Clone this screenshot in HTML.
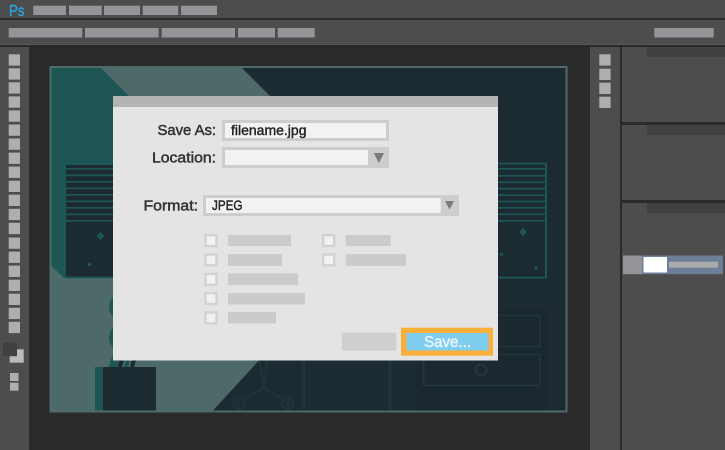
<!DOCTYPE html>
<html lang="en">
<head>
<meta charset="utf-8">
<title>Save As</title>
<style>
html,body{margin:0;padding:0;background:#2a2a2a;width:725px;height:450px;overflow:hidden}
svg{display:block}
text{font-family:"Liberation Sans",sans-serif}
</style>
</head>
<body>
<svg xmlns="http://www.w3.org/2000/svg" width="725" height="450" viewBox="0 0 725 450">
<rect width="725" height="450" fill="#2a2a2a"/>
<!-- top bars -->
<rect width="725" height="18" fill="#4c4c4c"/>
<rect y="18" width="725" height="2" fill="#2c2c2c"/>
<rect y="20" width="725" height="24" fill="#4d4d4d"/>
<rect y="44" width="725" height="1" fill="#575757"/>
<text x="9" y="16" font-size="15.5" fill="#2ea5df" stroke="#2ea5df" stroke-width=".4" textLength="15.5" lengthAdjust="spacingAndGlyphs">Ps</text>
<g fill="#939598">
<rect x="33.3" y="5.7" width="32.7" height="9.3"/>
<rect x="69" y="5.7" width="32.7" height="9.3"/>
<rect x="104" y="5.7" width="36" height="9.3"/>
<rect x="142.7" y="5.7" width="35.6" height="9.3"/>
<rect x="181" y="5.7" width="36" height="9.3"/>
<rect x="8.7" y="28" width="73.6" height="9.5"/>
<rect x="85" y="28" width="73.7" height="9.5"/>
<rect x="161.7" y="28" width="73.3" height="9.5"/>
<rect x="238" y="28" width="37" height="9.5"/>
<rect x="277.7" y="28" width="37" height="9.5"/>
<rect x="654.3" y="28" width="59.4" height="9.5"/>
</g>
<!-- left toolbar -->
<rect y="47" width="29" height="403" fill="#4d4d4d"/>
<g fill="#adaeb0">
<rect x="8.7" y="54.3" width="11.3" height="11.3"/><rect x="8.7" y="68.3" width="11.3" height="11.3"/>
<rect x="8.7" y="82.3" width="11.3" height="11.3"/><rect x="8.7" y="96.4" width="11.3" height="11.3"/>
<rect x="8.7" y="110.4" width="11.3" height="11.3"/><rect x="8.7" y="124.5" width="11.3" height="11.3"/>
<rect x="8.7" y="138.5" width="11.3" height="11.3"/><rect x="8.7" y="152.6" width="11.3" height="11.3"/>
<rect x="8.7" y="166.6" width="11.3" height="11.3"/><rect x="8.7" y="180.7" width="11.3" height="11.3"/>
<rect x="8.7" y="194.7" width="11.3" height="11.3"/><rect x="8.7" y="208.8" width="11.3" height="11.3"/>
<rect x="8.7" y="222.8" width="11.3" height="11.3"/><rect x="8.7" y="237.5" width="11.3" height="11.3"/>
<rect x="8.7" y="251.6" width="11.3" height="11.3"/><rect x="8.7" y="265.6" width="11.3" height="11.3"/>
<rect x="8.7" y="279.7" width="11.3" height="11.3"/><rect x="8.7" y="293.7" width="11.3" height="11.3"/>
<rect x="8.7" y="307.8" width="11.3" height="11.3"/><rect x="8.7" y="321.8" width="11.3" height="11.3"/>
</g>
<rect x="9.7" y="349.3" width="14" height="13.4" fill="#b9babc"/>
<rect x="3" y="342.7" width="14" height="13.5" fill="#404042"/>
<rect x="10" y="373" width="8.5" height="8" fill="#adaeb0"/>
<rect x="10" y="382.7" width="8.5" height="8" fill="#adaeb0"/>
<!-- canvas -->
<rect x="49.5" y="66" width="518" height="346.5" fill="#4e6b6a"/>
<rect x="51.5" y="68" width="514" height="342.5" fill="#1c2b32"/>
<polygon points="51.5,68 242,68 300,126 300,300 263,356 213,410.5 51.5,410.5" fill="#4d6a69"/>
<polygon points="51.5,68 101,68 180,147 180,278 64,278 51.5,266" fill="#1d5654"/>
<!-- darker cabinet -->
<rect x="415" y="307" width="133" height="103.5" fill="#1b2830"/>
<rect x="423.7" y="315.5" width="116" height="31" fill="none" stroke="#21373c" stroke-width="1.6"/>
<rect x="423.7" y="354.5" width="116" height="31" fill="none" stroke="#21373c" stroke-width="1.6"/>
<circle cx="481" cy="370" r="5.5" fill="none" stroke="#21393e" stroke-width="1.8"/>
<!-- chair & lines -->
<g fill="none" stroke="#1f3539" stroke-width="1.8">
<path d="M303.7 360V410M390 360V410" stroke-width="3"/>
<path d="M263.5 388L259.5 360M263.5 388L267.5 360" stroke-width="2"/>
<path d="M263.5 388L243 400M263.5 388L284 400" stroke-width="2"/>
<circle cx="238.8" cy="403.3" r="5.6" stroke-width="2"/>
<circle cx="287.7" cy="403.3" r="5.6" stroke-width="2"/>
<circle cx="238" cy="403" r="1.6"/>
<circle cx="288" cy="403" r="1.6"/>
</g>
<!-- shelves -->
<rect x="66" y="165" width="300" height="113" fill="#1c2b32"/>
<rect x="66" y="276.6" width="120" height="1.8" fill="#1d5654"/>
<g fill="#1d5654">
<rect x="66" y="168" width="60" height="1.7"/><rect x="66" y="174.5" width="60" height="1.7"/>
<rect x="66" y="181" width="60" height="1.7"/><rect x="66" y="187.5" width="60" height="1.7"/>
<rect x="66" y="194" width="60" height="1.7"/><rect x="66" y="200.5" width="60" height="1.7"/>
<rect x="66" y="207" width="60" height="1.7"/><rect x="66" y="213.5" width="60" height="1.7"/>
<rect x="66" y="220" width="60" height="1.7"/>
<polygon points="100.5,232 104.5,236 100.5,240 96.5,236"/>
<circle cx="89.5" cy="264.5" r="1.8"/>
</g>
<g fill="#1d5654">
<rect x="490" y="162.7" width="57" height="1.8"/>
<rect x="490" y="168" width="56" height="1.7"/><rect x="490" y="175" width="56" height="1.7"/>
<rect x="490" y="181.4" width="56" height="1.7"/><rect x="490" y="187.8" width="56" height="1.7"/>
<rect x="490" y="194.3" width="56" height="1.7"/><rect x="490" y="200.7" width="56" height="1.7"/>
<rect x="490" y="207" width="56" height="1.7"/><rect x="490" y="213.4" width="56" height="1.7"/>
<rect x="490" y="220" width="56" height="1.7"/>
<rect x="545" y="162.7" width="2" height="115.8"/>
<rect x="490" y="276.7" width="57" height="1.8"/>
<polygon points="523,228 527,232 523,236 519,232"/>
<circle cx="501.7" cy="254.3" r="1.6"/>
<circle cx="536" cy="267.7" r="1.6"/>
</g>
<!-- plant -->
<g fill="#1d5654">
<circle cx="123.5" cy="307" r="14.5"/>
<circle cx="123.5" cy="337.5" r="14.5"/>
<path d="M109 367C110 360 112 356 116 354H120V367Z"/>
</g>
<path d="M120 367C121 362 122 359 125 357M132 367C133 362 134 359 137 357" stroke="#1c2b32" stroke-width="4" fill="none"/>
<path d="M126 367C127 362 128 359 131 357" stroke="#1d5654" stroke-width="4" fill="none"/>
<rect x="95" y="367" width="9" height="43.5" fill="#1d5654"/>
<rect x="103" y="367" width="53" height="43.5" fill="#1c2b32"/>
<!-- right dock -->
<rect x="590" y="47" width="30" height="403" fill="#4d4d4d"/>
<g fill="#adaeb0">
<rect x="599.3" y="54.3" width="11.3" height="11.3"/>
<rect x="599.3" y="68.7" width="11.3" height="11.3"/>
<rect x="599.3" y="82.7" width="11.3" height="11.3"/>
<rect x="599.3" y="96.7" width="11.3" height="11.3"/>
</g>
<rect x="622" y="47" width="103" height="75" fill="#4d4d4d"/>
<rect x="622" y="125" width="103" height="75" fill="#4d4d4d"/>
<rect x="622" y="203" width="103" height="247" fill="#4d4d4d"/>
<rect x="647" y="47" width="78" height="10" fill="#414143"/>
<rect x="647" y="125" width="78" height="10" fill="#414143"/>
<rect x="647" y="203" width="78" height="10" fill="#414143"/>
<rect x="623" y="255.5" width="19" height="18.7" fill="#939598"/>
<rect x="642" y="255.5" width="81" height="18.7" fill="#6d7e99"/>
<rect x="643.5" y="257" width="23.5" height="15.5" fill="#fff"/>
<rect x="669" y="261.7" width="49" height="6" fill="#ababac"/>
<!-- dialog -->
<rect x="113" y="96" width="385" height="264.5" fill="#e4e4e4"/>
<rect x="113" y="96" width="385" height="11" fill="#b4b4b4"/>
<text x="216" y="135" text-anchor="end" font-size="15" fill="#333" stroke="#333" stroke-width=".5" textLength="58.5" lengthAdjust="spacingAndGlyphs">Save As:</text>
<text x="216" y="162.5" text-anchor="end" font-size="15" fill="#333" stroke="#333" stroke-width=".5" textLength="64" lengthAdjust="spacingAndGlyphs">Location:</text>
<text x="198" y="210.5" text-anchor="end" font-size="15" fill="#333" stroke="#333" stroke-width=".5" textLength="54.5" lengthAdjust="spacingAndGlyphs">Format:</text>
<rect x="222" y="120" width="167" height="21" fill="#cdcdcd"/>
<rect x="225" y="123" width="161" height="15" fill="#f2f2f2"/>
<text x="231" y="135" font-size="14" fill="#222" stroke="#222" stroke-width=".4" textLength="75.5" lengthAdjust="spacingAndGlyphs">filename.jpg</text>
<rect x="222" y="147" width="167" height="21" fill="#cdcdcd"/>
<rect x="225" y="150" width="143" height="15" fill="#f2f2f2"/>
<polygon points="373.7,153 384,153 378.9,163" fill="#7b7b7b"/>
<rect x="203" y="195" width="256" height="21" fill="#cdcdcd"/>
<rect x="206" y="198" width="234.7" height="15" fill="#f2f2f2"/>
<polygon points="445,201 454,201 449.5,209.5" fill="#7b7b7b"/>
<text x="212" y="210" font-size="13.5" fill="#222" stroke="#222" stroke-width=".4" textLength="30.5" lengthAdjust="spacingAndGlyphs">JPEG</text>
<!-- checkboxes -->
<g fill="#f2f2f2" stroke="#d2d2d2" stroke-width="2.4">
<rect x="205.5" y="235.2" width="11" height="10.8"/>
<rect x="205.5" y="254.5" width="11" height="10.8"/>
<rect x="205.5" y="273.9" width="11" height="10.8"/>
<rect x="205.5" y="293.2" width="11" height="10.8"/>
<rect x="205.5" y="312.5" width="11" height="10.8"/>
<rect x="323.2" y="235.2" width="11" height="10.8"/>
<rect x="323.2" y="254.5" width="11" height="10.8"/>
</g>
<g fill="#cbcbcb">
<rect x="228" y="235" width="63" height="11"/>
<rect x="228" y="254" width="54" height="12"/>
<rect x="228" y="273.3" width="70" height="11.7"/>
<rect x="228" y="293" width="77" height="11.5"/>
<rect x="228" y="312" width="48" height="11.5"/>
<rect x="345.7" y="235" width="45" height="11"/>
<rect x="345.7" y="254" width="60.3" height="12"/>
</g>
<rect x="341.7" y="332.7" width="54.7" height="18" fill="#cfcfcf"/>
<rect x="401" y="327.7" width="92" height="28" fill="#fbb03b"/>
<rect x="406.5" y="333" width="82" height="17.5" fill="#7fcdef"/>
<text x="424" y="347" font-size="15.5" fill="#e6f4fb" stroke="#e6f4fb" stroke-width=".5" textLength="47" lengthAdjust="spacingAndGlyphs">Save...</text>
</svg>
</body>
</html>
